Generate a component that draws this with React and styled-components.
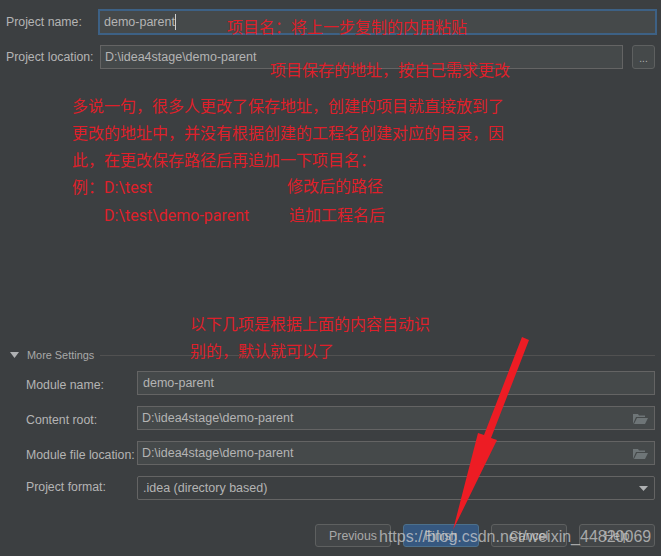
import React from "react";
import styled, { createGlobalStyle } from "styled-components";

const Global = createGlobalStyle`
  html, body { margin: 0; padding: 0; background: #3c3f41; }
  #root { width: 661px; height: 556px; overflow: hidden; }
`;

const Page = styled.div`
  position: relative;
  width: 661px;
  height: 556px;
  box-sizing: border-box;
  padding: 9px 6px 9px 0;
  background: #3c3f41;
  color: #b4b4b4;
  font: 12.3px "Liberation Sans", Arial, sans-serif;
  display: flex;
  flex-direction: column;
  overflow: hidden;
`;

const TopRow = styled.div`
  display: flex;
  align-items: center;
  margin-bottom: 10px;
`;

const TopLabel = styled.div`
  flex: none;
  width: 94px;
  padding-left: 6px;
  box-sizing: border-box;
  white-space: nowrap;
`;

const FocusField = styled.div`
  flex: 1;
  height: 26px;
  margin-right: -2px;
  margin-left: 4px;
  box-sizing: border-box;
  border: 2px solid #3d6185;
  background: #45494a;
  padding-left: 4px;
  font-size: 12.5px;
  display: flex;
  align-items: center;
`;

const Caret = styled.span`
  display: inline-block;
  width: 1px;
  height: 16px;
  background: #d0d0d0;
`;

const Field = styled.div`
  flex: 1;
  min-width: 0;
  height: 24px;
  box-sizing: border-box;
  border: 1px solid #646464;
  border-radius: ${(p) => (p.$round ? "2px" : "0")};
  background: ${(p) => (p.$plain ? "#3c3f41" : "#45494a")};
  padding: 0 6px 0 ${(p) => p.$inset || 4}px;
  font-size: 12.5px;
  display: flex;
  align-items: center;
  justify-content: space-between;
  white-space: nowrap;
`;

const LocationField = styled(Field)`
  margin-left: 6px;
`;

const BrowseButton = styled.div`
  flex: none;
  width: 23px;
  height: 24px;
  margin-left: 9px;
  box-sizing: border-box;
  border: 1px solid #5e6060;
  border-radius: 3px;
  background: #45494a;
  display: flex;
  align-items: center;
  justify-content: center;
  padding-top: 3px;
  font-size: 10px;
`;

const Settings = styled.div`
  margin-top: auto;
  display: flex;
  flex-direction: column;
`;

const SectionHead = styled.div`
  display: flex;
  align-items: center;
  height: 16px;
  margin-bottom: 8px;
  padding-left: 10px;
  font-size: 10.9px;
  color: #a8a8a8;
`;

const Triangle = styled.svg`
  flex: none;
  width: 9px;
  height: 6px;
  margin-right: 8px;
`;

const SectionLine = styled.div`
  flex: 1;
  height: 1px;
  margin-left: 6px;
  background: #515151;
`;

const FormRow = styled.div`
  display: flex;
  align-items: center;
  padding-left: 26px;
  margin-bottom: 11px;
`;

const FormLabel = styled.div`
  flex: none;
  width: 111px;
  padding-top: ${(p) => p.$down || 0}px;
  padding-bottom: ${(p) => p.$up || 0}px;
  white-space: nowrap;
`;

const Footer = styled.div`
  display: flex;
  justify-content: flex-end;
  gap: 12px;
  margin-top: 13px;
`;

const Button = styled.div`
  width: 76px;
  height: 23px;
  box-sizing: border-box;
  border: 1px solid ${(p) => (p.$primary ? "#4c708c" : "#5e6060")};
  border-radius: 3px;
  background: ${(p) => (p.$primary ? "#365880" : "#434648")};
  display: flex;
  align-items: center;
  justify-content: center;
  color: #a9a9a9;
`;

const Note = styled.div`
  position: absolute;
  left: ${(p) => p.$x}px;
  top: ${(p) => p.$y}px;
  font: 16px/24px Roboto, "Noto Sans CJK SC", sans-serif;
  color: #df1f2a;
  white-space: nowrap;
`;

const Arrow = styled.svg`
  position: absolute;
  left: 0;
  top: 0;
  width: 661px;
  height: 556px;
  pointer-events: none;
`;

const Watermark = styled.div`
  position: absolute;
  left: 379px;
  top: 527px;
  font: 16px/20px "Liberation Sans", Arial, sans-serif;
  color: rgba(214, 214, 214, 0.7);
  white-space: nowrap;
`;

const Folder = () => (
  <svg width="15" height="11" viewBox="0 0 15 11">
    <path d="M0 11V1h5l1 1.5h6V4H3L0 11Z" fill="#6e7577" />
    <path d="M1 11l3-6h11l-3 6H1Z" fill="#6e7577" />
  </svg>
);

const Chevron = () => (
  <svg width="9" height="5" viewBox="0 0 9 5">
    <path d="M0 0h9L4.5 5Z" fill="#afb1b3" />
  </svg>
);

const path = "D:\\idea4stage\\demo-parent";

const notes = [
  [227, 16, "项目名：将上一步复制的内用粘贴"],
  [270, 59, "项目保存的地址，按自己需求更改"],
  [72, 95, "多说一句，很多人更改了保存地址，创建的项目就直接放到了"],
  [72, 122, "更改的地址中，并没有根据创建的工程名创建对应的目录，因"],
  [72, 149, "此，在更改保存路径后再追加一下项目名："],
  [72, 176, "例：D:\\test"],
  [287, 175, "修改后的路径"],
  [104, 204, "D:\\test\\demo-parent"],
  [289, 204, "追加工程名后"],
  [190, 313, "以下几项是根据上面的内容自动识"],
  [190, 340, "别的，默认就可以了"],
];

export default function App() {
  return (
    <Page>
      <Global />
      <TopRow>
        <TopLabel>Project name:</TopLabel>
        <FocusField>
          demo-parent
          <Caret />
        </FocusField>
      </TopRow>
      <TopRow>
        <TopLabel>Project location:</TopLabel>
        <LocationField>{path}</LocationField>
        <BrowseButton>...</BrowseButton>
      </TopRow>

      <Settings>
        <SectionHead>
          <Triangle viewBox="0 0 9 6">
            <path d="M0 0h9L4.5 6Z" fill="#afb1b3" />
          </Triangle>
          More Settings
          <SectionLine />
        </SectionHead>
        <FormRow>
          <FormLabel $down={3}>Module name:</FormLabel>
          <Field $inset={5}>demo-parent</Field>
        </FormRow>
        <FormRow>
          <FormLabel $down={3}>Content root:</FormLabel>
          <Field>
            {path}
            <Folder />
          </Field>
        </FormRow>
        <FormRow>
          <FormLabel $down={3}>Module file location:</FormLabel>
          <Field>
            {path}
            <Folder />
          </Field>
        </FormRow>
        <FormRow>
          <FormLabel $up={3}>Project format:</FormLabel>
          <Field $plain $round $inset={5}>
            .idea (directory based)
            <Chevron />
          </Field>
        </FormRow>
        <Footer>
          <Button>Previous</Button>
          <Button $primary>Finish</Button>
          <Button>Cancel</Button>
          <Button>Help</Button>
        </Footer>
      </Settings>

      {notes.map(([x, y, text]) => (
        <Note key={text} $x={x} $y={y}>
          {text}
        </Note>
      ))}

      <Arrow viewBox="0 0 661 556">
        <polygon
          points="522,337 529,340 491,438 497,440 453,530 478,433 484,435"
          fill="#ed1c24"
        />
      </Arrow>
      <Watermark>https://blog.csdn.net/weixin_44820069</Watermark>
    </Page>
  );
}
